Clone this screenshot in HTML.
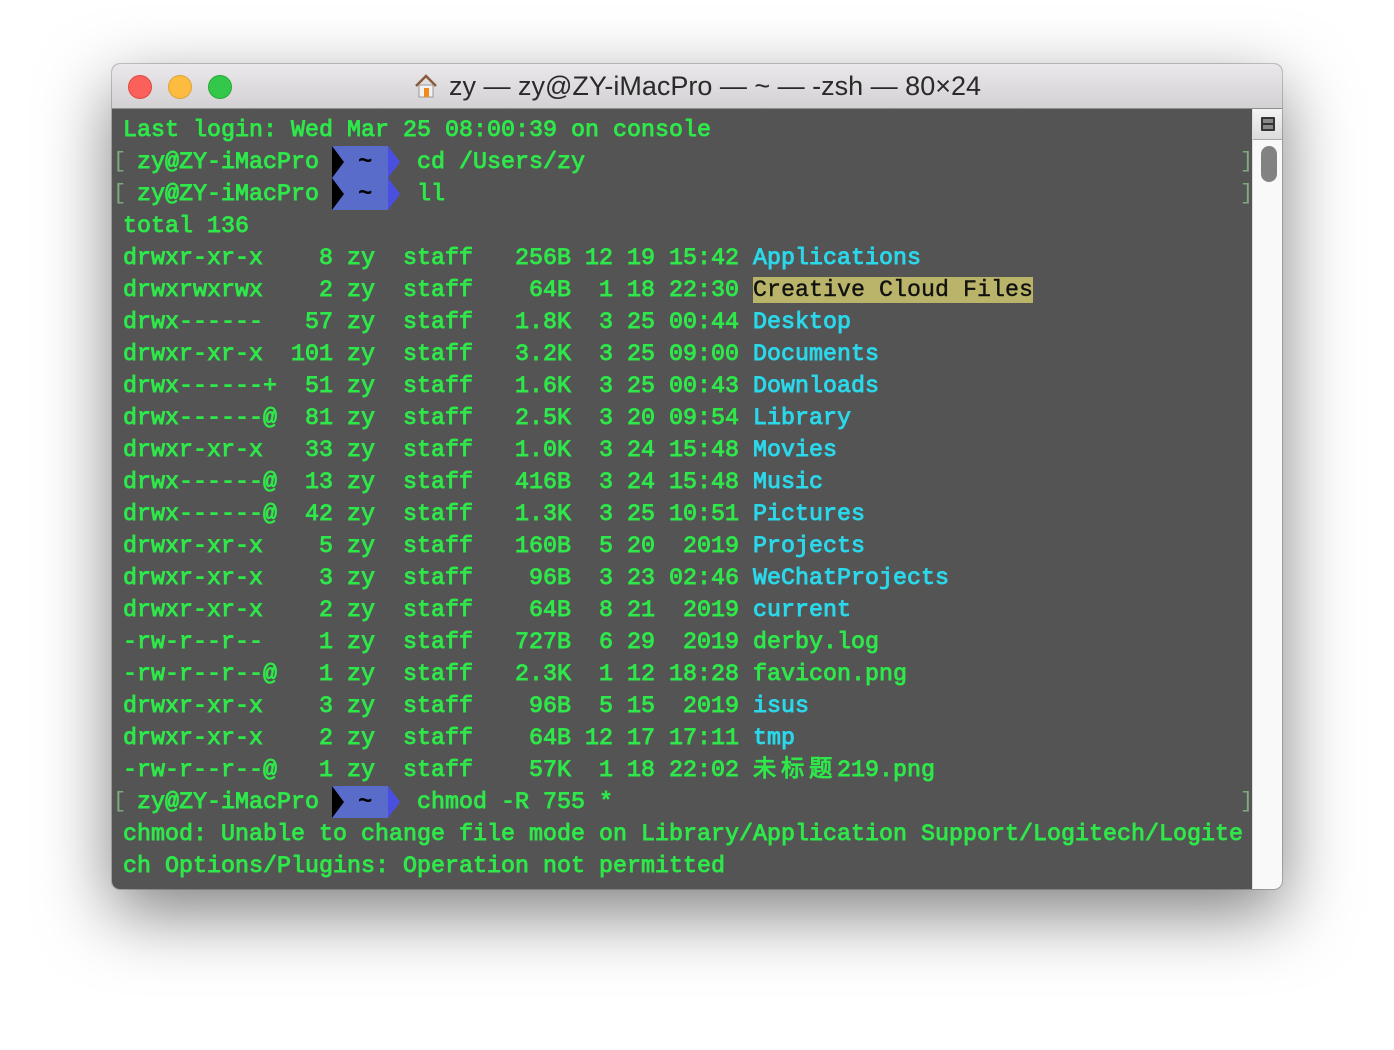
<!DOCTYPE html>
<html><head><meta charset="utf-8"><style>
html,body{margin:0;padding:0;background:#fff;width:1394px;height:1050px;overflow:hidden}
.win{position:absolute;left:112px;top:64px;width:1170px;height:825px;border-radius:8px;background:#545454;box-shadow:0 24px 70px rgba(0,0,0,0.5),0 0 0 1px rgba(0,0,0,0.2);overflow:hidden}
.tb{position:absolute;left:0;top:0;width:1170px;height:44px;background:linear-gradient(#eae8ea,#d3d1d3);border-bottom:1px solid #8e8e8e}
.dot{position:absolute;top:11px;width:24px;height:24px;border-radius:50%}
.title{position:absolute;left:0;width:1170px;top:7px;text-align:center;font:27px "Liberation Sans",sans-serif;color:#2a2a2a}
.sb{position:absolute;left:1140px;top:45px;width:30px;height:780px;background:#f9f9f9;border-left:1px solid #ddd}
.sbtn{position:absolute;left:0;top:0;width:30px;height:30px;background:linear-gradient(#f4f4f4,#dcdcdc);border-bottom:1px solid #aaa}
.thumb{position:absolute;left:8px;top:37px;width:16px;height:36px;border-radius:8px;background:#828282}
.l{position:absolute;left:123px;margin:0;height:32px;line-height:32px;font-family:"Liberation Mono","Noto Sans CJK SC",monospace;font-size:23.3px;color:#2ee84a;white-space:pre;-webkit-text-stroke:0.9px;letter-spacing:0.02px}
.c{color:#2ad8ea}
.hl{background:#b9b46a;color:#111;-webkit-text-stroke:0.4px #111}
.br{position:absolute;color:#7faa7f;font:22px "Liberation Mono",monospace;line-height:32px}
.seg{position:absolute;left:332px;width:56px;height:32px;background:#5a6cc9}
.seg:before{content:"";position:absolute;left:0;top:0;border-top:16px solid transparent;border-bottom:16px solid transparent;border-left:12px solid #000}
.seg:after{content:"";position:absolute;left:56px;top:0;border-top:16px solid transparent;border-bottom:16px solid transparent;border-left:12px solid #4b4fe0}
.seg span{position:absolute;left:26px;top:3px;line-height:30px;font:bold 24px "Liberation Mono",monospace;color:#000}
.cj{display:inline-block;width:28px;text-align:left}
</style></head><body>
<div class="win">
<div class="tb">
<div class="dot" style="left:16px;background:#fc605b;border:1px solid #de4a43;width:22px;height:22px"></div>
<div class="dot" style="left:56px;background:#fdbc40;border:1px solid #dea236;width:22px;height:22px"></div>
<div class="dot" style="left:96px;background:#34c84a;border:1px solid #27aa35;width:22px;height:22px"></div>
<div class="title"><svg width="26" height="26" viewBox="0 0 26 26" style="vertical-align:-4px;margin-right:10px"><path d="M3 13 L13 3 L23 13" fill="none" stroke="#8a5a3a" stroke-width="2.5"/><rect x="6" y="12" width="14" height="12" fill="#f2f2f2" stroke="#999"/><rect x="11" y="15" width="5" height="9" fill="#f08a1c"/></svg>zy — zy@ZY-iMacPro — ~ — -zsh — 80×24</div>
</div>
<div class="sb"><div class="sbtn"><div style="position:absolute;left:8px;top:8px;width:14px;height:14px;background:#333;border-radius:1px"><div style="position:absolute;left:2px;top:2px;width:10px;height:4px;background:#888"></div><div style="position:absolute;left:2px;top:8px;width:10px;height:4px;background:#888"></div></div></div><div class="thumb"></div></div>
</div>

<pre class="l" style="top:114px">Last login: Wed Mar 25 08:00:39 on console</pre>

<div class="br" style="left:113px;top:146px">[</div><div class="br" style="left:1240px;top:146px">]</div>
<pre class="l" style="top:146px"> zy@ZY-iMacPro       cd /Users/zy</pre>
<div class="seg" style="top:146px"><span>~</span></div>

<div class="br" style="left:113px;top:178px">[</div><div class="br" style="left:1240px;top:178px">]</div>
<pre class="l" style="top:178px"> zy@ZY-iMacPro       ll</pre>
<div class="seg" style="top:178px"><span>~</span></div>

<pre class="l" style="top:210px">total 136</pre>
<pre class="l" style="top:242px">drwxr-xr-x    8 zy  staff   256B 12 19 15:42 <span class="c">Applications</span></pre>
<pre class="l" style="top:274px">drwxrwxrwx    2 zy  staff    64B  1 18 22:30 <span class="hl">Creative Cloud Files</span></pre>
<pre class="l" style="top:306px">drwx------   57 zy  staff   1.8K  3 25 00:44 <span class="c">Desktop</span></pre>
<pre class="l" style="top:338px">drwxr-xr-x  101 zy  staff   3.2K  3 25 09:00 <span class="c">Documents</span></pre>
<pre class="l" style="top:370px">drwx------+  51 zy  staff   1.6K  3 25 00:43 <span class="c">Downloads</span></pre>
<pre class="l" style="top:402px">drwx------@  81 zy  staff   2.5K  3 20 09:54 <span class="c">Library</span></pre>
<pre class="l" style="top:434px">drwxr-xr-x   33 zy  staff   1.0K  3 24 15:48 <span class="c">Movies</span></pre>
<pre class="l" style="top:466px">drwx------@  13 zy  staff   416B  3 24 15:48 <span class="c">Music</span></pre>
<pre class="l" style="top:498px">drwx------@  42 zy  staff   1.3K  3 25 10:51 <span class="c">Pictures</span></pre>
<pre class="l" style="top:530px">drwxr-xr-x    5 zy  staff   160B  5 20  2019 <span class="c">Projects</span></pre>
<pre class="l" style="top:562px">drwxr-xr-x    3 zy  staff    96B  3 23 02:46 <span class="c">WeChatProjects</span></pre>
<pre class="l" style="top:594px">drwxr-xr-x    2 zy  staff    64B  8 21  2019 <span class="c">current</span></pre>
<pre class="l" style="top:626px">-rw-r--r--    1 zy  staff   727B  6 29  2019 derby.log</pre>
<pre class="l" style="top:658px">-rw-r--r--@   1 zy  staff   2.3K  1 12 18:28 favicon.png</pre>
<pre class="l" style="top:690px">drwxr-xr-x    3 zy  staff    96B  5 15  2019 <span class="c">isus</span></pre>
<pre class="l" style="top:722px">drwxr-xr-x    2 zy  staff    64B 12 17 17:11 <span class="c">tmp</span></pre>
<pre class="l" style="top:754px">-rw-r--r--@   1 zy  staff    57K  1 18 22:02 <span class="cj">未</span><span class="cj">标</span><span class="cj">题</span>219.png</pre>

<div class="br" style="left:113px;top:786px">[</div><div class="br" style="left:1240px;top:786px">]</div>
<pre class="l" style="top:786px"> zy@ZY-iMacPro       chmod -R 755 *</pre>
<div class="seg" style="top:786px"><span>~</span></div>

<pre class="l" style="top:818px">chmod: Unable to change file mode on Library/Application Support/Logitech/Logite</pre>
<pre class="l" style="top:850px">ch Options/Plugins: Operation not permitted</pre>
</body></html>
